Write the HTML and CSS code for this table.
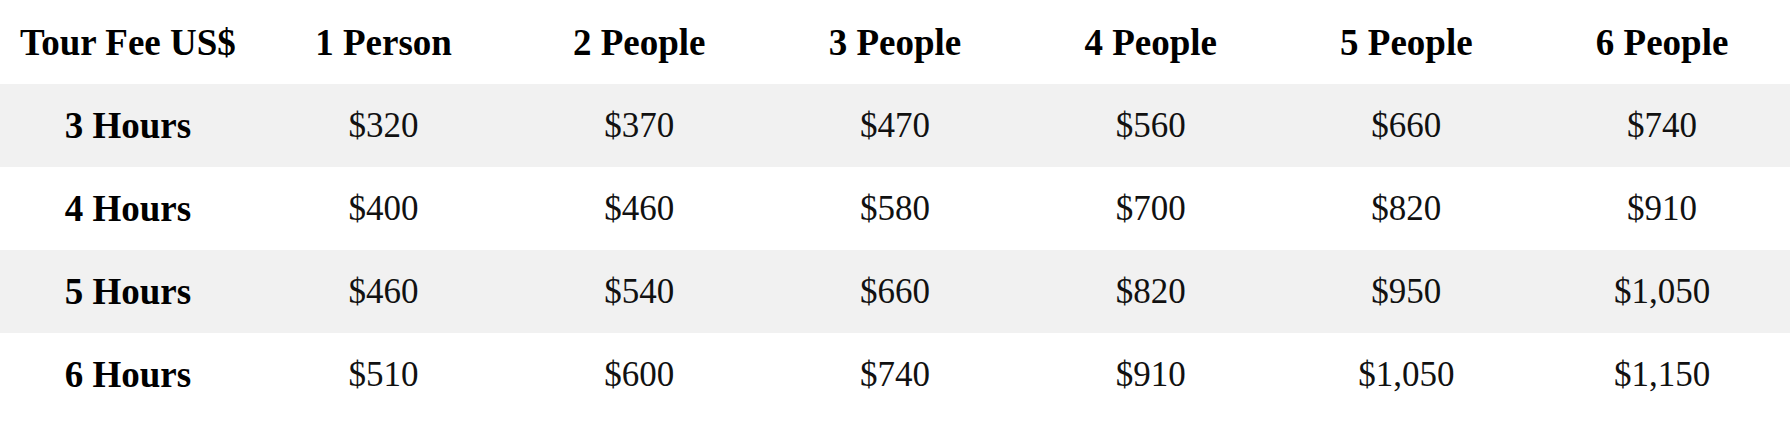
FILE: index.html
```html
<!DOCTYPE html>
<html>
<head>
<meta charset="utf-8">
<link rel="stylesheet" href="styles.css">
</head>
<body>
<table class="fees">
  <thead>
    <tr class="head-row">
      <th>Tour Fee US$</th><th>1 Person</th><th>2 People</th><th>3 People</th><th>4 People</th><th>5 People</th><th>6 People</th>
    </tr>
  </thead>
  <tbody>
    <tr class="alt"><th>3 Hours</th><td>$320</td><td>$370</td><td>$470</td><td>$560</td><td>$660</td><td>$740</td></tr>
    <tr><th>4 Hours</th><td>$400</td><td>$460</td><td>$580</td><td>$700</td><td>$820</td><td>$910</td></tr>
    <tr class="alt"><th>5 Hours</th><td>$460</td><td>$540</td><td>$660</td><td>$820</td><td>$950</td><td>$1,050</td></tr>
    <tr><th>6 Hours</th><td>$510</td><td>$600</td><td>$740</td><td>$910</td><td>$1,050</td><td>$1,150</td></tr>
  </tbody>
</table>
</body>
</html>
```
FILE: styles.css
```css
html, body {
  margin: 0;
  padding: 0;
  background: #fff;
}
.fees {
  width: 1790px;
  border-collapse: collapse;
  table-layout: fixed;
  font-family: "Liberation Serif", "Times New Roman", serif;
  font-size: 35px;
  color: #111;
}
.fees th, .fees td {
  padding: 0;
  height: 83px;
  text-align: center;
  vertical-align: middle;
}
.fees th {
  font-weight: bold;
  font-size: 37px;
  color: #000;
}
.head-row th {
  height: 84px;
}
.fees td {
  font-weight: normal;
}
.alt {
  background: #f1f1f1;
}
```
